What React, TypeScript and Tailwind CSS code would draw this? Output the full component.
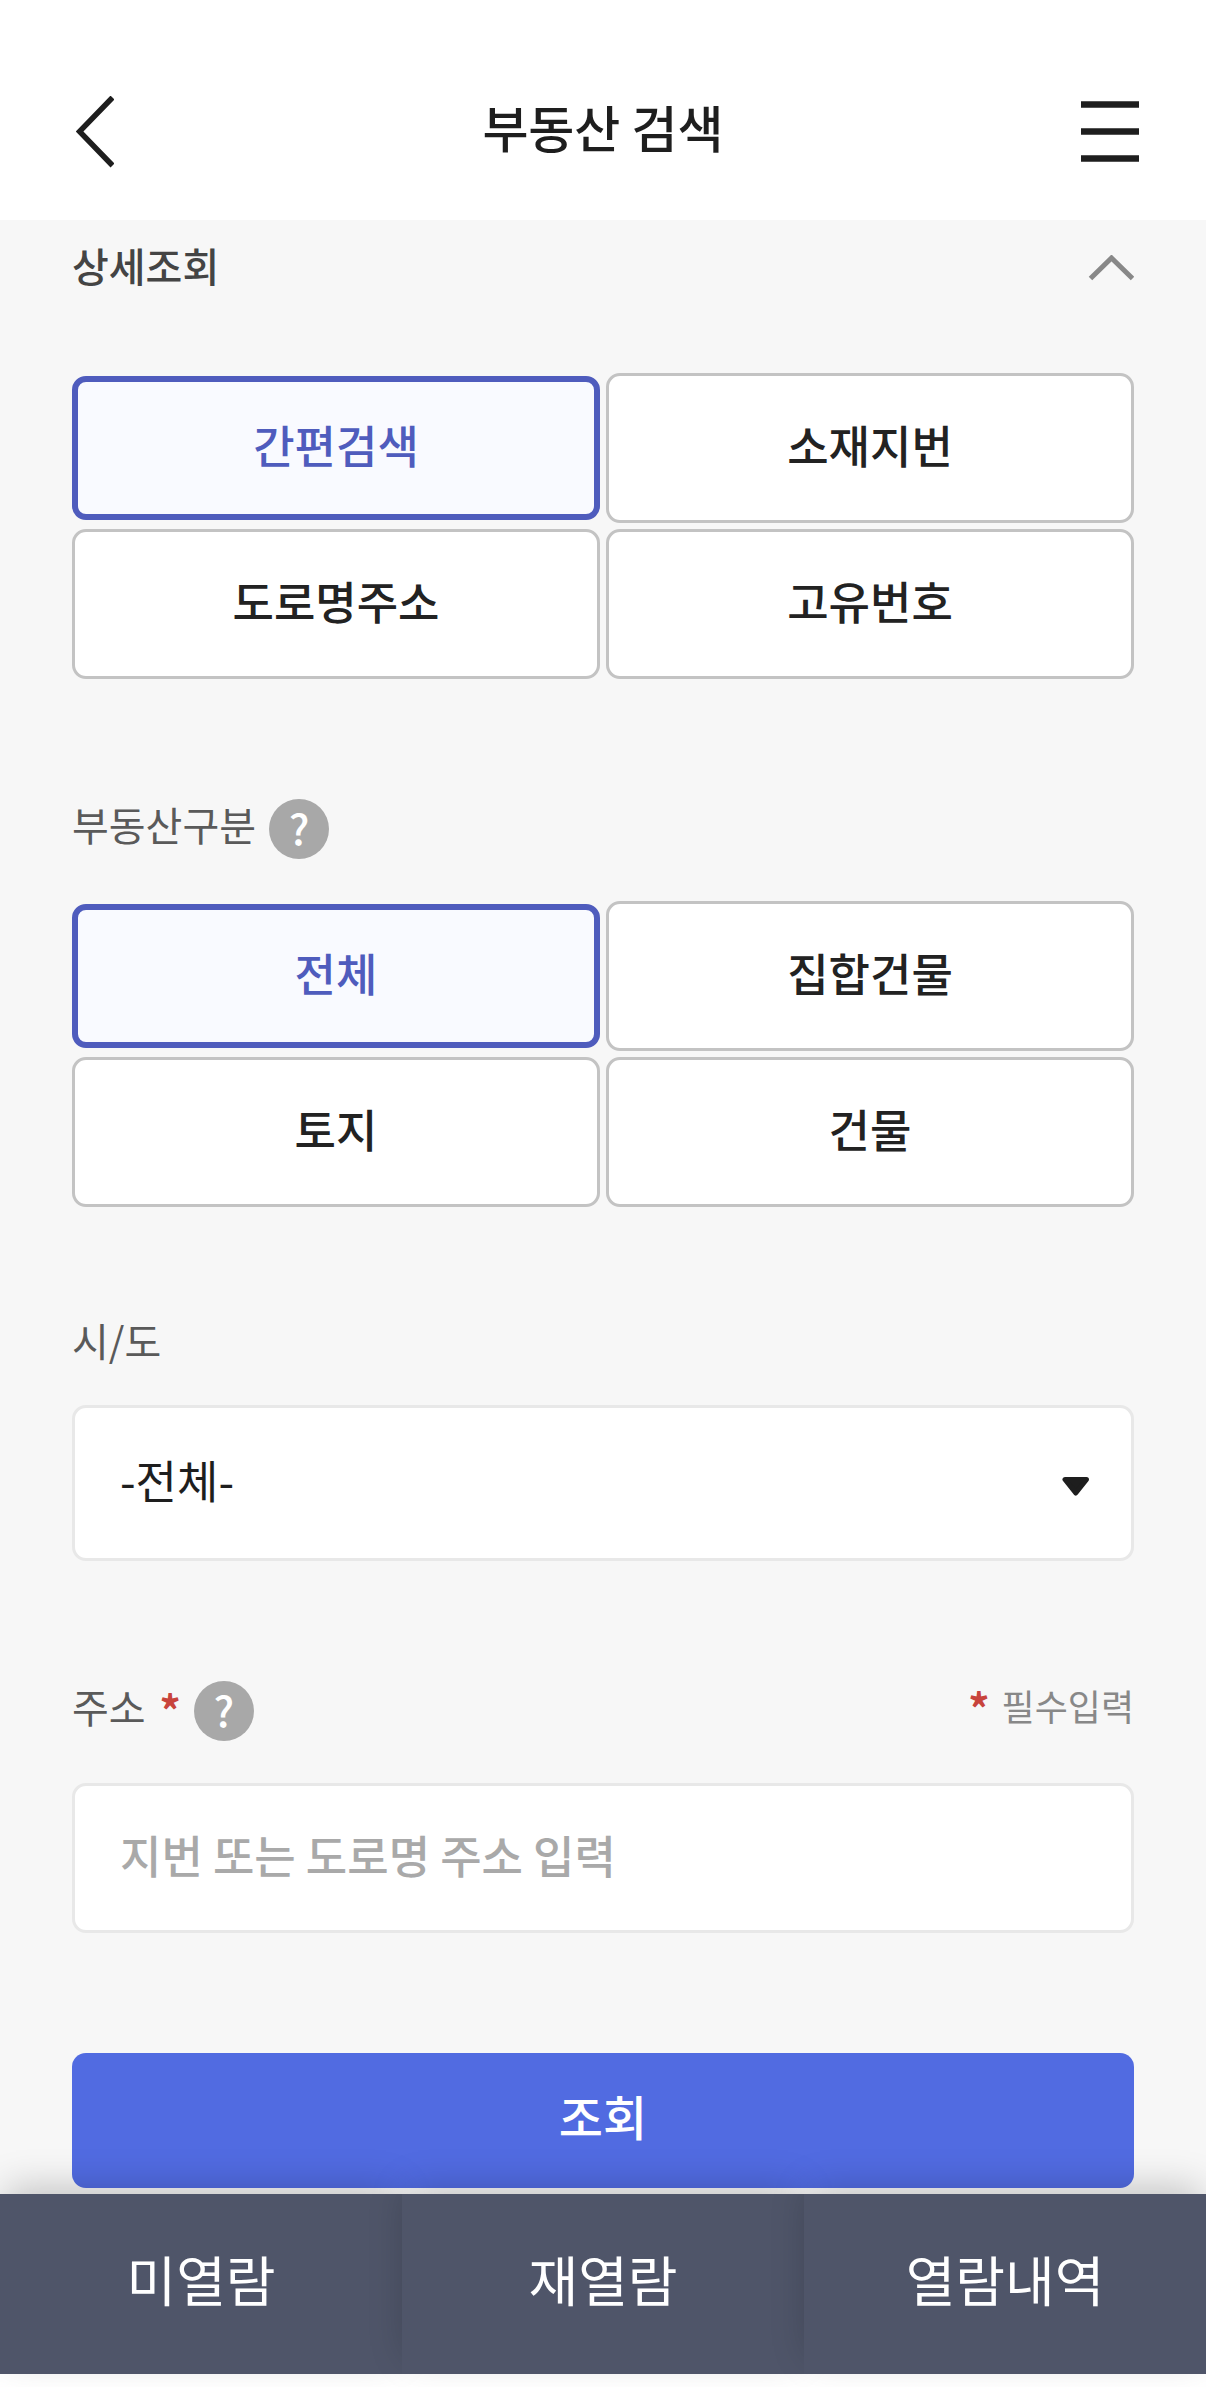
import { useState } from "react";

const SEARCH_TYPES = ["간편검색", "소재지번", "도로명주소", "고유번호"];
const ESTATE_TYPES = ["전체", "집합건물", "토지", "건물"];
const REGIONS = ["-전체-", "서울특별시", "부산광역시", "경기도"];
const BOTTOM_TABS = ["미열람", "재열람", "열람내역"];

export default function App() {
  const [open, setOpen] = useState(true);
  const [searchType, setSearchType] = useState(SEARCH_TYPES[0]);
  const [estateType, setEstateType] = useState(ESTATE_TYPES[0]);
  const [region, setRegion] = useState(REGIONS[0]);
  const [address, setAddress] = useState("");

  return (
    <div className="bg-white font-['Noto_Sans_CJK_KR',sans-serif] text-[#1e1e1e]">
      <Header />

      <main className="bg-[#f7f7f7] px-[72px] pb-1.5">
        <button
          type="button"
          aria-expanded={open}
          onClick={() => setOpen(!open)}
          className="flex h-24 w-full items-center justify-between text-[#444]"
        >
          <span className="pb-1.5 text-[40px] leading-12 font-medium">
            상세조회
          </span>
          <svg
            viewBox="0 0 46 26"
            className={`h-[26px] w-[46px] ${open ? "" : "rotate-180"}`}
            fill="none"
            stroke="#888"
            strokeWidth="5"
          >
            <path d="M2.5 23.5 L23.5 3 L44.5 23.5" />
          </svg>
        </button>

        {open && (
          <form onSubmit={(e) => e.preventDefault()}>
            <div className="mt-[57px]">
              <OptionGrid
                label="상세조회"
                options={SEARCH_TYPES}
                value={searchType}
                onChange={setSearchType}
              />
            </div>

            {/* Estate type */}
            <div className="mt-[120px]">
              <div className="mb-[42px] flex items-center gap-[13px]">
                <LabelText>부동산구분</LabelText>
                <HelpButton />
              </div>
              <OptionGrid
                label="부동산구분"
                options={ESTATE_TYPES}
                value={estateType}
                onChange={setEstateType}
              />
            </div>

            {/* Region */}
            <div className="mt-[120px]">
              <label htmlFor="region" className="mb-[42px] flex">
                <LabelText>시/도</LabelText>
              </label>
              <div className="relative">
                <select
                  id="region"
                  value={region}
                  onChange={(e) => setRegion(e.target.value)}
                  className="block h-[156px] w-full appearance-none rounded-[14px] border-3 border-[#e8e8e8] bg-white px-[45px] pb-1.5 text-[45px]"
                >
                  {REGIONS.map((name) => (
                    <option key={name}>{name}</option>
                  ))}
                </select>
                <svg
                  viewBox="0 0 28 20"
                  className="pointer-events-none absolute top-[71px] right-11 h-5 w-7"
                  fill="#1e1e1e"
                  stroke="#1e1e1e"
                  strokeWidth="5"
                  strokeLinejoin="round"
                >
                  <path d="M3 3.5 H24.5 L13.75 17 Z" />
                </svg>
              </div>
            </div>

            {/* Address */}
            <div className="mt-[120px]">
              <div className="mb-[42px] flex items-center justify-between">
                <div className="flex items-center gap-[13px]">
                  <label htmlFor="address" className="flex gap-3.5">
                    <LabelText>주소</LabelText>
                    <Asterisk />
                  </label>
                  <HelpButton />
                </div>
                <p className="flex gap-3 pb-2 text-4xl leading-7 text-[#888]">
                  <Asterisk />
                  필수입력
                </p>
              </div>
              <input
                id="address"
                value={address}
                onChange={(e) => setAddress(e.target.value)}
                placeholder="지번 또는 도로명 주소 입력"
                className="block h-[150px] w-full rounded-[14px] border-3 border-[#e8e8e8] bg-white px-[45px] pb-2 text-[45px] font-medium placeholder:text-[#a9a9a9]"
              />
            </div>

            <button
              type="submit"
              className="mt-[120px] h-[135px] w-full rounded-[14px] bg-[#516be1] pb-3 text-5xl font-medium text-white"
            >
              조회
            </button>
          </form>
        )}
      </main>

      {/* Bottom tabs */}
      <nav className="relative mb-[13px] grid grid-cols-3">
        {BOTTOM_TABS.map((tab) => (
          <button
            key={tab}
            type="button"
            className="h-[180px] bg-[#4f5569] pb-3 text-[54px] text-white shadow-[0_-12px_36px_-6px_rgba(0,0,0,0.22)]"
          >
            {tab}
          </button>
        ))}
      </nav>
    </div>
  );
}

function Header() {
  return (
    <header className="flex h-[220px] items-center justify-between bg-white px-[67px] pt-[43px]">
      <button type="button" aria-label="뒤로" className="w-[58px] pl-[9px]">
        <svg
          viewBox="0 0 38 72"
          className="h-[72px] w-[38px]"
          fill="none"
          stroke="#1e1e1e"
          strokeWidth="5.5"
        >
          <path d="M36.5 1.5 L3.5 35.5 L36.5 69.5" />
        </svg>
      </button>
      <h1 className="pb-3 text-[50px] leading-16 font-medium">부동산 검색</h1>
      <button type="button" aria-label="메뉴">
        <svg
          viewBox="0 0 58 62"
          className="h-[62px] w-[58px]"
          fill="none"
          stroke="#1e1e1e"
          strokeWidth="6.5"
        >
          <path d="M0 3.5 H58 M0 30.5 H58 M0 57.5 H58" />
        </svg>
      </button>
    </header>
  );
}

/* ---------- Reusable ---------- */

function OptionGrid({
  label,
  options,
  value,
  onChange,
}: {
  label: string;
  options: string[];
  value: string;
  onChange: (option: string) => void;
}) {
  return (
    <div role="group" aria-label={label} className="grid grid-cols-2 gap-1.5">
      {options.map((option) => (
        <button
          key={option}
          type="button"
          aria-pressed={option === value}
          onClick={() => onChange(option)}
          className={`rounded-[14px] pb-1.5 text-[45px] font-medium
            ${
              option === value
                ? "my-[3px] h-36 border-6 border-[#4f5cbd] bg-[#f9faff] text-[#4f5cbd]"
                : "h-[150px] border-3 border-[#c3c3c3] bg-white text-[#222]"
            }`}
        >
          {option}
        </button>
      ))}
    </div>
  );
}

function LabelText({ children }: { children: React.ReactNode }) {
  return (
    <span className="pb-2.5 text-[40px] leading-[26px] text-[#5a5a5a]">
      {children}
    </span>
  );
}

function Asterisk() {
  return (
    <span className="text-[42px] leading-8 font-bold text-[#c8443c]">*</span>
  );
}

function HelpButton() {
  return (
    <button
      type="button"
      aria-label="도움말"
      className="flex size-15 items-center justify-center rounded-full bg-[#a8a8a8] pb-1 text-[42px] leading-10 font-medium text-white"
    >
      ?
    </button>
  );
}
